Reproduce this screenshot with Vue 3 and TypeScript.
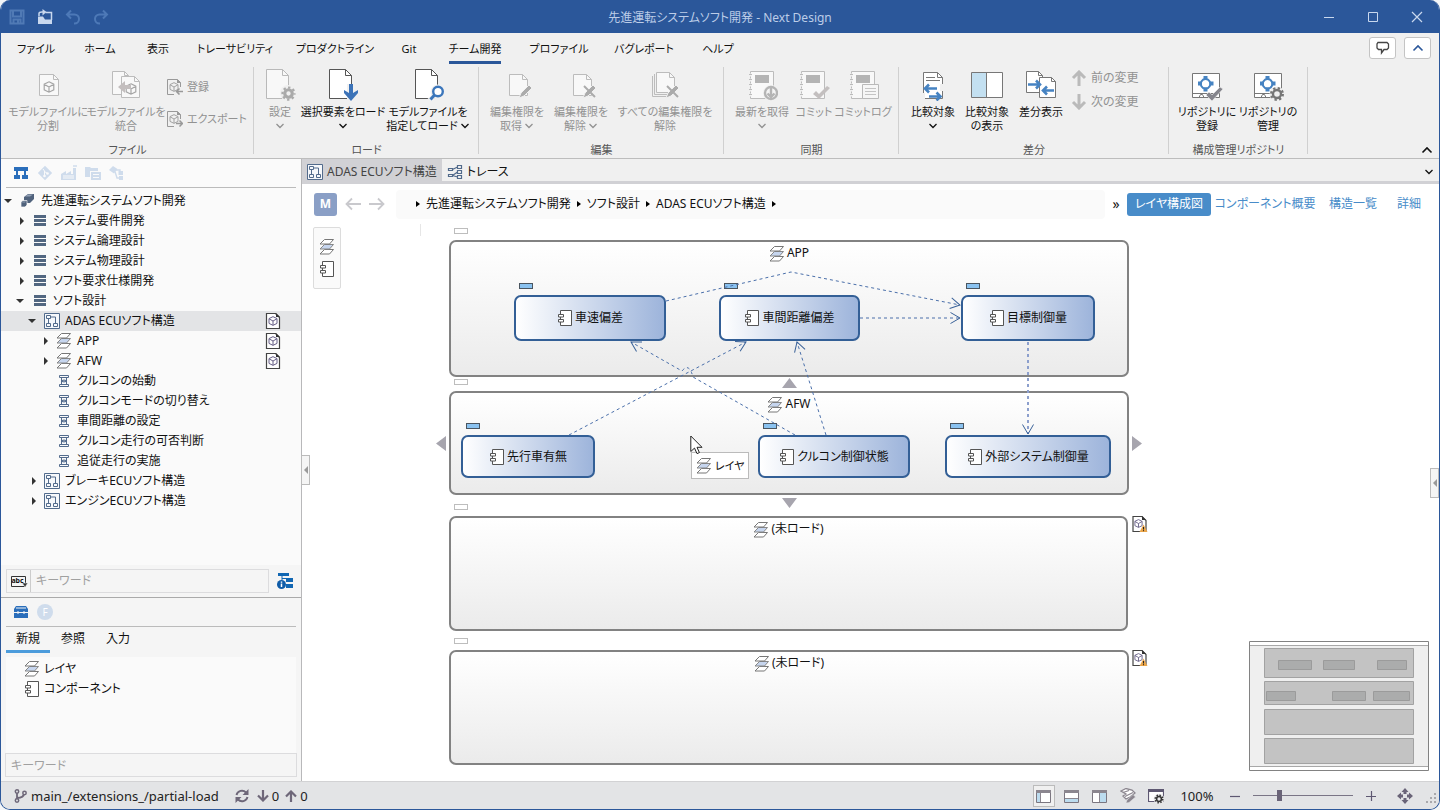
<script setup lang="ts">
import { ref } from 'vue'

interface RibbonButton {
  icon: string
  lines: string[]
  off?: boolean
  drop?: 'below' | 'inline'
}
interface SmallButton {
  icon: string
  text: string
}
interface RibbonGroup {
  id: string
  title: string
  buttons: RibbonButton[]
  small?: SmallButton[]
}
interface TreeRow {
  level: number
  icon: string
  text: string
  caret?: 'open' | 'closed'
  file?: boolean
}
interface Box {
  x: number
  y: number
  w: number
  h: number
  text: string
}

const menu = ['ファイル', 'ホーム', '表示', 'トレーサビリティ', 'プロダクトライン', 'Git', 'チーム開発', 'プロファイル', 'バグレポート', 'ヘルプ']
const activeMenu = ref('チーム開発')

const groups: RibbonGroup[] = [
  {
    id: 'file',
    title: 'ファイル',
    buttons: [
      { icon: 'split', lines: ['モデルファイルに', '分割'], off: true },
      { icon: 'merge', lines: ['モデルファイルを', '統合'], off: true },
    ],
    small: [
      { icon: 'register', text: '登録' },
      { icon: 'export', text: 'エクスポート' },
    ],
  },
  {
    id: 'load',
    title: 'ロード',
    buttons: [
      { icon: 'page-gear', lines: ['設定'], off: true, drop: 'below' },
      { icon: 'page-down', lines: ['選択要素をロード'], drop: 'below' },
      { icon: 'page-find', lines: ['モデルファイルを', '指定してロード'], drop: 'inline' },
    ],
  },
  {
    id: 'edit',
    title: '編集',
    buttons: [
      { icon: 'page-pen', lines: ['編集権限を', '取得'], off: true, drop: 'inline' },
      { icon: 'page-nopen', lines: ['編集権限を', '解除'], off: true, drop: 'inline' },
      { icon: 'pages-nopen', lines: ['すべての編集権限を', '解除'], off: true },
    ],
  },
  {
    id: 'sync',
    title: '同期',
    buttons: [
      { icon: 'book-down', lines: ['最新を取得'], off: true, drop: 'below' },
      { icon: 'book-check', lines: ['コミット'], off: true },
      { icon: 'book-log', lines: ['コミットログ'], off: true },
    ],
  },
  {
    id: 'diff',
    title: '差分',
    buttons: [
      { icon: 'cmp-page', lines: ['比較対象'], drop: 'below' },
      { icon: 'cmp-show', lines: ['比較対象', 'の表示'] },
      { icon: 'cmp-diff', lines: ['差分表示'] },
    ],
    small: [
      { icon: 'up', text: '前の変更' },
      { icon: 'down', text: '次の変更' },
    ],
  },
  {
    id: 'repo',
    title: '構成管理リポジトリ',
    buttons: [
      { icon: 'repo-check', lines: ['リポジトリに', '登録'] },
      { icon: 'repo-gear', lines: ['リポジトリの', '管理'] },
    ],
  },
]

const tree: TreeRow[] = [
  { level: 0, icon: 'project', text: '先進運転システムソフト開発', caret: 'open' },
  { level: 1, icon: 'bars', text: 'システム要件開発', caret: 'closed' },
  { level: 1, icon: 'bars', text: 'システム論理設計', caret: 'closed' },
  { level: 1, icon: 'bars', text: 'システム物理設計', caret: 'closed' },
  { level: 1, icon: 'bars', text: 'ソフト要求仕様開発', caret: 'closed' },
  { level: 1, icon: 'bars', text: 'ソフト設計', caret: 'open' },
  { level: 2, icon: 'struct', text: 'ADAS ECUソフト構造', caret: 'open', file: true },
  { level: 3, icon: 'layer', text: 'APP', caret: 'closed', file: true },
  { level: 3, icon: 'layer', text: 'AFW', caret: 'closed', file: true },
  { level: 3, icon: 'seq', text: 'クルコンの始動' },
  { level: 3, icon: 'seq', text: 'クルコンモードの切り替え' },
  { level: 3, icon: 'seq', text: '車間距離の設定' },
  { level: 3, icon: 'seq', text: 'クルコン走行の可否判断' },
  { level: 3, icon: 'seq', text: '追従走行の実施' },
  { level: 2, icon: 'struct', text: 'ブレーキECUソフト構造', caret: 'closed' },
  { level: 2, icon: 'struct', text: 'エンジンECUソフト構造', caret: 'closed' },
]
const selectedRow = ref('ADAS ECUソフト構造')

const crumbs = ['先進運転システムソフト開発', 'ソフト設計', 'ADAS ECUソフト構造']
const views = ['レイヤ構成図', 'コンポーネント概要', '構造一覧', '詳細']
const activeView = ref('レイヤ構成図')

const paletteTabs = ['新規', '参照', '入力']
const activePalette = ref('新規')

const layers: Box[] = [
  { x: 147, y: 18, w: 680, h: 137, text: 'APP' },
  { x: 147, y: 169, w: 680, h: 104, text: 'AFW' },
  { x: 147, y: 294, w: 679, h: 115, text: '(未ロード)' },
  { x: 147, y: 428, w: 680, h: 115, text: '(未ロード)' },
]
const parts: Box[] = [
  { x: 212, y: 73, w: 152, h: 46, text: '車速偏差' },
  { x: 417, y: 73, w: 141, h: 46, text: '車間距離偏差' },
  { x: 659, y: 73, w: 134, h: 46, text: '目標制御量' },
  { x: 159, y: 213, w: 134, h: 43, text: '先行車有無' },
  { x: 456, y: 213, w: 152, h: 43, text: 'クルコン制御状態' },
  { x: 643, y: 213, w: 166, h: 43, text: '外部システム制御量' },
]
const links = [
  'M364 79 L489 50 L658 83',
  'M558 96 H658',
  'M267 213 L444 120',
  'M493 213 L391 155 Q387 140 380 149 L329 120',
  'M524 213 L495 120',
]
const zoom = ref(25)

const place = (b: Box) => ({ left: `${b.x}px`, top: `${b.y}px`, width: `${b.w}px`, height: `${b.h}px` })
const tagAt = (b: Box, up: number) => ({ left: `${b.x + 5}px`, top: `${b.y - up}px` })
</script>

<template>
  <div class="window">
    <svg class="defs" aria-hidden="true">
      <defs>
        <marker id="tip" markerWidth="14" markerHeight="14" refX="11" refY="7" orient="auto" markerUnits="userSpaceOnUse">
          <path d="M1.500 1.500 L11 7 L1.500 12.500" fill="none" stroke="#3a6299" />
        </marker>
      </defs>
      <symbol id="i-save" viewBox="0 0 16 16"><path d="M1.500 1.500h13v13h-13zM4 1.500v6h8v-6M4.500 14.500v-4h7v4" fill="none" stroke="#507ab5" stroke-width="2" /><path d="M8 11h2v3h-2z" fill="#507ab5" /></symbol>
      <symbol id="i-open" viewBox="0 0 16 16"><path d="M1 7.500h5l2 3h7V15H1z" fill="#c9d8ee" /><path d="M8.500 3.500h6V11M2 7V4.500Q2 3 5 3h2" fill="none" stroke="#c9d8ee" stroke-width="1.500" /><path d="M5.500 0l4 3-4 3.500z" fill="#c9d8ee" /></symbol>
      <symbol id="i-undo" viewBox="0 0 16 16"><path d="M6 1.500L2 5.500l4 4M2 5.500h7.500a4.500 4.500 0 0 1 0 9H9" fill="none" stroke="#4d79b7" stroke-width="2" /></symbol>
      <symbol id="i-redo" viewBox="0 0 16 16"><path d="M10 1.500l4 4-4 4M14 5.500H6.500a4.500 4.500 0 0 0 0 9H7" fill="none" stroke="#4d79b7" stroke-width="2" /></symbol>

      <symbol id="i-cube" viewBox="0 0 12 12"><path d="M6 .8l4.800 2.300v5.800L6 11.200 1.200 8.900V3.100zM1.200 3.300L6 6l4.800-2.700M6 6v5" fill="none" stroke="currentColor" stroke-width="1.200" /></symbol>
      <symbol id="i-cog" viewBox="0 0 16 16"><circle cx="8" cy="8" r="4" fill="none" stroke="currentColor" stroke-width="3.400" /><circle cx="8" cy="8" r="6.400" fill="none" stroke="currentColor" stroke-width="2.400" stroke-dasharray="2.513" stroke-dashoffset="1.250" /></symbol>

      <symbol id="i-split" viewBox="0 0 32 32"><path d="M7.500 5.500h14l5 5v16h-19z" fill="#f8f8f8" stroke="#bcbcbc" /><path d="M21.500 5.500v5h5" fill="none" stroke="#bcbcbc" /><use href="#i-cube" x="11" y="12" width="12" height="12" color="#a6a6a6" /></symbol>
      <symbol id="i-merge" viewBox="0 0 32 32"><path d="M2.500 2.500h12l4 4v19h-16z" fill="#f8f8f8" stroke="#bcbcbc" /><path d="M14.500 2.500v4h4" fill="none" stroke="#bcbcbc" /><path d="M11.500 7.500h13l5 5v16h-18z" fill="#f8f8f8" stroke="#bcbcbc" /><path d="M24.500 7.500v5h5" fill="none" stroke="#bcbcbc" /><use href="#i-cube" x="15" y="14" width="12" height="12" color="#a6a6a6" /><path d="M8 18l7-6v4h6v4h-6v4z" fill="#c3bebe" /></symbol>
      <symbol id="i-register" viewBox="0 0 16 16"><path d="M7 15.500H.5V.5h10l3 3V8" fill="none" stroke="#999" /><path d="M10 0l4 4h-4z" fill="#999" /><use href="#i-cube" x="2" y="3" width="10" height="10" color="#a2a2a2" /><path d="M16 12.500h-6M12.500 9.500l-3 3 3 3" fill="none" stroke="#999" stroke-width="1.500" /></symbol>
      <symbol id="i-export" viewBox="0 0 16 16"><path d="M7 15.500H.5V.5h10l3 3V8" fill="none" stroke="#999" /><path d="M10 0l4 4h-4z" fill="#999" /><use href="#i-cube" x="2" y="3" width="10" height="10" color="#a2a2a2" /><path d="M9 12.500h6M12.500 9.500l3 3-3 3" fill="none" stroke="#999" stroke-width="1.500" /></symbol>
      <symbol id="i-page-gear" viewBox="0 0 32 32"><path d="M2.500.5h16l6 6v23h-22z" fill="#f8f8f8" stroke="#b9b9b9" /><path d="M18.500.5v6h6" fill="none" stroke="#b9b9b9" /><circle cx="24" cy="24" r="8" fill="#f0f0f0" /><use href="#i-cog" x="17" y="17" width="15" height="15" color="#aaa" /></symbol>
      <symbol id="i-page-down" viewBox="0 0 32 32"><path d="M2.500.5h16l6 6v23h-22z" fill="#fff" stroke="#555" /><path d="M18.500.5v6h6" fill="none" stroke="#555" /><path d="M20 15h8v17h-8z" fill="#f0f0f0" /><path d="M22 15h4v9l5-3v3l-7 8-7-8v-3l5 3z" fill="#3c73b8" /></symbol>
      <symbol id="i-page-find" viewBox="0 0 32 32"><path d="M3.500.5h16l6 6v23h-22z" fill="#fff" stroke="#555" /><path d="M19.500.5v6h6" fill="none" stroke="#555" /><circle cx="26" cy="23" r="7.500" fill="#f0f0f0" /><path d="M17 32l6-6" stroke="#f0f0f0" stroke-width="5" /><circle cx="26" cy="22.500" r="4.800" fill="#fff" stroke="#3b76bb" stroke-width="2.400" /><path d="M18.500 30.500l4-4.500" stroke="#3b76bb" stroke-width="3" /></symbol>
      <symbol id="i-page-pen" viewBox="0 0 32 32"><path d="M8.500 5.500h13l5 5v16h-18z" fill="#f8f8f8" stroke="#bcbcbc" /><path d="M21.500 5.500v5h5" fill="none" stroke="#bcbcbc" /><path d="M18 29l2-5 8-8 3 3-8 8z" fill="#ababab" stroke="#f0f0f0" /></symbol>
      <symbol id="i-page-nopen" viewBox="0 0 32 32"><path d="M8.500 5.500h13l5 5v16h-18z" fill="#f8f8f8" stroke="#bcbcbc" /><path d="M21.500 5.500v5h5" fill="none" stroke="#bcbcbc" /><path d="M18 29l2-5 8-8 3 3-8 8z" fill="#ababab" stroke="#f0f0f0" /><path d="M19 17l11 11" stroke="#ababab" stroke-width="2" /></symbol>
      <symbol id="i-pages-nopen" viewBox="0 0 32 32"><path d="M3.500 7v20.500h15M5.500 5v20.500h15" fill="none" stroke="#bcbcbc" /><path d="M7.500 3.500h13l5 5v15h-18z" fill="#f8f8f8" stroke="#bcbcbc" /><path d="M20.500 3.500v5h5" fill="none" stroke="#bcbcbc" /><path d="M17 29l2-5 8-8 3 3-8 8z" fill="#ababab" stroke="#f0f0f0" /><path d="M18 17l11 11" stroke="#ababab" stroke-width="2" /></symbol>
      <symbol id="i-book" viewBox="0 0 32 32"><path d="M4.500 2.500h23v27h-23z" fill="#f8f8f8" stroke="#bcbcbc" /><path d="M4.500 4.500v24" stroke="#f0f0f0" stroke-width="2" stroke-dasharray="3 2" /><path d="M3 5.500h3M3 10.500h3M3 15.500h3M3 20.500h3M3 25.500h3" stroke="#bcbcbc" /><path d="M9 6h14v8H9z" fill="#b4b4b4" /></symbol>
      <symbol id="i-book-down" viewBox="0 0 32 32"><use href="#i-book" width="32" height="32" /><circle cx="25" cy="24" r="8" fill="#f0f0f0" /><circle cx="25" cy="24" r="6" fill="#f4f4f4" stroke="#b4b4b4" stroke-width="2.400" /><path d="M25 19v9M21.500 24.500L25 28l3.500-3.500" fill="none" stroke="#b4b4b4" stroke-width="2.400" /></symbol>
      <symbol id="i-book-check" viewBox="0 0 32 32"><use href="#i-book" x="-1" width="32" height="32" /><path d="M15 25l3-3 3 3 8-8 3 2-11 11z" fill="#c3bfbf" /></symbol>
      <symbol id="i-book-log" viewBox="0 0 32 32"><use href="#i-book" width="32" height="32" /><path d="M15.500 15.500h16v14h-16z" fill="#f6f6f6" stroke="#b9b9b9" /><path d="M18 19.500h11M18 22.500h11M18 25.500h11" stroke="#c4c4c4" /></symbol>
      <symbol id="i-cmp-page" viewBox="0 0 32 32"><path d="M6.500 3.500h14l5 5v21h-19z" fill="#fff" stroke="#777" /><path d="M20.500 3.500v5h5" fill="none" stroke="#777" /><path d="M9 8.500h9M9 11.500h14" stroke="#777" /><path d="M5 24h3v7h-3zM23 15h4v7h-4z" fill="#f0f0f0" /><path d="M8 19.500h12M12 15.500l-4 4 4 4M12 27.500h12M19.500 23.500l4 4-4 4" fill="none" stroke="#4683c2" stroke-width="2.600" /></symbol>
      <symbol id="i-cmp-show" viewBox="0 0 32 32"><path d="M.5 3.500h31v25H.5z" fill="#fff" stroke="#777" /><path d="M1 4h14v24H1z" fill="#c3e0f1" /><path d="M15.500 4v24" stroke="#777" /></symbol>
      <symbol id="i-cmp-diff" viewBox="0 0 32 32"><path d="M1.500 2.500h12l4 4v17h-16z" fill="#fff" stroke="#777" /><path d="M13.500 2.500v4h4" fill="none" stroke="#777" /><path d="M14.500 8.500h12l4 4v16h-16z" fill="#fff" stroke="#777" /><path d="M26.500 8.500v4h4" fill="none" stroke="#777" /><path d="M3 15.500h12M11 11.500l4 4-4 4M29 21.500H18M22 17.500l-4 4 4 4" fill="none" stroke="#4683c2" stroke-width="2.600" /></symbol>
      <symbol id="i-up" viewBox="0 0 16 16"><path d="M8 16V2M2 8l6-6 6 6" fill="none" stroke="#bababa" stroke-width="3" /></symbol>
      <symbol id="i-down" viewBox="0 0 16 16"><path d="M8 0v14M2 8l6 6 6-6" fill="none" stroke="#bababa" stroke-width="3" /></symbol>
      <symbol id="i-repo" viewBox="0 0 32 32"><path d="M1.500 4.500h27v24h-27z" fill="#fff" stroke="#777" /><path d="M2 24.500h26M8 28.500l1.500-3h2l1.500 3M18 28.500l1.500-3h2" fill="none" stroke="#777" /><path d="M14.500 10a4.800 4.800 0 1 0 .1 0z" fill="none" stroke="#4683c2" stroke-width="2" /><path d="M12.500 7h4v4h-4zM12.500 18.500h4v4h-4zM7 12.500h4v4H7zM18.500 12.500h4v4h-4z" fill="#4683c2" /></symbol>
      <symbol id="i-repo-check" viewBox="0 0 32 32"><use href="#i-repo" width="32" height="32" /><path d="M15 26l3-3 3 3 8-8 3 2-11 12z" fill="#85858c" stroke="#f0f0f0" stroke-width=".6" /></symbol>
      <symbol id="i-repo-gear" viewBox="0 0 32 32"><use href="#i-repo" x="1" width="32" height="32" /><circle cx="25" cy="25" r="7.500" fill="#f0f0f0" /><circle cx="25" cy="25" r="4" fill="none" stroke="#777" stroke-width="2.400" /><circle cx="25" cy="25" r="5.800" fill="none" stroke="#777" stroke-width="2.400" stroke-dasharray="2.278" /></symbol>

      <symbol id="i-project" viewBox="0 0 16 16"><path d="M4 4l4-3h6v5l-4 4H4z" fill="#50627c" /><path d="M5 3.500l3-2h5l-3 2z" fill="#93a1b6" /><path d="M1 9l2-1.500h4V12l-2 2H1z" fill="#50627c" stroke="#fafafa" stroke-width=".7" /><path d="M2 9.500l1-1h3l-1 1z" fill="#93a1b6" /></symbol>
      <symbol id="i-bars" viewBox="0 0 16 16"><path d="M2 2h12v3H2zM2 6h12v3H2zM2 10h12v3H2z" fill="#526781" /></symbol>
      <symbol id="i-struct" viewBox="0 0 16 16"><path d="M.5.5h15v15H.5z" fill="#f6f8fb" stroke="#526b8c" /><path d="M2.500 2.500h4v3h-4zM2.500 10.500h4v3h-4zM9.500 10.500h4v3h-4zM4.500 5.500v5M6.500 4h5v6.500" fill="none" stroke="#526b8c" /></symbol>
      <symbol id="i-layer" viewBox="0 0 16 16"><path d="M5.500 10.500h9l-4 4.500H1z" fill="#fff" stroke="#777" /><path d="M5.500 5.500h9l-4 4.500H1z" fill="#c6d5ee" stroke="#888" /><path d="M5.500.5h9l-4 4.500H1z" fill="#fff" stroke="#777" /></symbol>
      <symbol id="i-part" viewBox="0 0 16 16"><path d="M3.500.5h11v15h-11z" fill="#fff" stroke="#555" /><path d="M1.500 4.500h5v2.500h-5zM1.500 9.500h5v2.500h-5z" fill="#fff" stroke="#555" /></symbol>
      <symbol id="i-seq" viewBox="0 0 16 16"><path d="M3.500 2.500h9v2h-9zM3.500 11.500h9v2h-9zM5.500 4.500v7M10.500 4.500v7M5.500 8h5" fill="none" stroke="#526b8c" /><path d="M7.500 6v4l-2-2zM8.500 6v4l2-2z" fill="#526b8c" /></symbol>
      <symbol id="i-file" viewBox="0 0 16 16"><path d="M1.500.5h9l4 4v11h-13z" fill="#fff" stroke="#444" stroke-width="1.200" /><path d="M11 0l4 4h-4z" fill="#333" /><use href="#i-cube" x="3" y="3" width="10" height="10" color="#675f86" /></symbol>
      <symbol id="i-file-warn" viewBox="0 0 16 16"><path d="M1 .5h9l4 4v11H1z" fill="#fff" stroke="#444" stroke-width="1.200" /><path d="M10 0l4 4h-4z" fill="#333" /><use href="#i-cube" x="2" y="3" width="9" height="9" color="#675f86" /><path d="M11.500 8.500L15.500 16h-8z" fill="#eba549" /><path d="M11.500 11v2.500M11.500 14.200v1" stroke="#222" /></symbol>
      <symbol id="i-trace" viewBox="0 0 16 16"><path d="M1.500 4.500h4v2h-4zM1.500 10.500h4v2h-4zM10.500 1.500h4v3h-4zM10.500 6.500h4v3h-4zM10.500 11.500h4v3h-4zM5.500 5.500l5-2.500M5.500 11.500L10.500 8M5.500 11.500l5 1.500" fill="none" stroke="#526b8c" stroke-width="1.200" /></symbol>

      <symbol id="i-nav-tree" viewBox="0 0 16 16"><path d="M1 2h14v4H1zM1 10h6v4H1zM9 10h6v4H9z" fill="#2a6ebb" /><path d="M4 6v4M12 6v4" stroke="#2a6ebb" stroke-width="2" /></symbol>
      <symbol id="i-nav-git" viewBox="0 0 16 16"><path d="M8 .8L15.200 8 8 15.200.8 8z" fill="#cfdcec" /><path d="M6 4l1.500 2v5M7.500 6.500l3 2" stroke="#fafafa" fill="none" /><circle cx="7.500" cy="11" r="1.300" fill="#fafafa" /><circle cx="10.500" cy="8.500" r="1.300" fill="#fafafa" /></symbol>
      <symbol id="i-nav-fac" viewBox="0 0 16 16"><path d="M0 15V9l5-3v3l5-3v3h2V3h3v12z" fill="#cfdcec" /><path d="M2 11h11M2 13h11" stroke="#fafafa" /><path d="M12 1h4" stroke="#cfdcec" stroke-width="1.500" /></symbol>
      <symbol id="i-nav-doc" viewBox="0 0 16 16"><path d="M0 2h5l1 1h7v3H5v6H0z" fill="#cfdcec" /><path d="M6 7h10v8H6z" fill="#cfdcec" /><path d="M8 9.500h6M8 12.500h6" stroke="#fafafa" /></symbol>
      <symbol id="i-nav-link" viewBox="0 0 16 16"><path d="M4 1l4.500 3L5 8.500 0 5zM9.500 6h4.500v4H9.500zM10 11h4v4h-4z" fill="#cfdcec" /><path d="M6 6.500L8 13h2M7 5h4v3" fill="none" stroke="#cfdcec" stroke-width="1.400" /></symbol>
      <symbol id="i-abc" viewBox="0 0 18 16"><path d="M1.500 3.500h14v10h-14z" fill="none" stroke="#333" /><path d="M12 10h6l-3 4z" fill="#333" stroke="#f5f5f5" stroke-width=".6" /></symbol>
      <symbol id="i-info" viewBox="0 0 16 16"><path d="M1 0h11v3H1zM9 5h7v4H9zM9 11h7v4H9z" fill="#1267b3" /><path d="M5 3v4M5 5.500h5" stroke="#1267b3" /><circle cx="4.500" cy="11.500" r="4.500" fill="#0f5ca8" /><path d="M4.500 8.500v1.300M4.500 10.500v3.500" stroke="#fff" stroke-width="1.500" /></symbol>
      <symbol id="i-box" viewBox="0 0 16 16"><path d="M3 2h10l2 3v3H1V5zM1 9h14v5H1z" fill="#2a6ebb" /><path d="M3 4h10" stroke="#f6f6f6" stroke-width="1" /><path d="M5 7v3M11 7v3" stroke="#f6f6f6" /></symbol>

      <symbol id="i-branch" viewBox="0 0 14 14"><path d="M3 3v8M3 9q7 0 7-5" fill="none" stroke="#6e6779" stroke-width="1.800" /><circle cx="3" cy="2.500" r="1.700" fill="#e3e4e6" stroke="#6e6779" stroke-width="1.500" /><circle cx="3" cy="11.500" r="1.700" fill="#e3e4e6" stroke="#6e6779" stroke-width="1.500" /><circle cx="10.500" cy="4" r="1.700" fill="#e3e4e6" stroke="#6e6779" stroke-width="1.500" /></symbol>
      <symbol id="i-sync" viewBox="0 0 14 14"><path d="M1.500 6A5.600 5.600 0 0 1 11 3.500M12.500 8A5.600 5.600 0 0 1 3 10.500" fill="none" stroke="#6e6779" stroke-width="1.900" /><path d="M13.500 0v6h-6zM.5 14V8h6z" fill="#6e6779" /></symbol>
      <symbol id="i-sdown" viewBox="0 0 12 12"><path d="M6 0v10M1 5.500l5 5 5-5" fill="none" stroke="#6e6779" stroke-width="2.200" /></symbol>
      <symbol id="i-sup" viewBox="0 0 12 12"><path d="M6 12V2M1 6.500l5-5 5 5" fill="none" stroke="#6e6779" stroke-width="2.200" /></symbol>
      <symbol id="i-p-left" viewBox="0 0 16 16"><path d="M.5 2.500h14v12H.5z" fill="#fff" stroke="#7b7680" /><path d="M0 2h15v3H0z" fill="#8b868f" /><path d="M1 5h3v9H1z" fill="#bcdcef" /><path d="M4.500 5v9" stroke="#8b868f" /></symbol>
      <symbol id="i-p-bottom" viewBox="0 0 16 16"><path d="M.5 2.500h14v12H.5z" fill="#fff" stroke="#7b7680" /><path d="M0 2h15v3H0z" fill="#8b868f" /><path d="M1 11h13v3H1z" fill="#bcdcef" /><path d="M1 10.500h13" stroke="#8b868f" /></symbol>
      <symbol id="i-p-right" viewBox="0 0 16 16"><path d="M.5 2.500h14v12H.5z" fill="#fff" stroke="#7b7680" /><path d="M0 2h15v3H0z" fill="#8b868f" /><path d="M8 5h6v9H8z" fill="#bcdcef" /><path d="M7.500 5v9" stroke="#8b868f" /></symbol>
      <symbol id="i-edit-model" viewBox="0 0 16 16"><path d="M1 3l5-2.500L12 2l3 3-5 4-4 2-3-3 3-2z" fill="#fff" stroke="#8b868f" stroke-width="1.300" /><path d="M3 4.500l6-2M5 8.500l8-4" stroke="#8b868f" stroke-width="1.300" /><path d="M6 15l1-3 6-5.500 2.500 2.500-6.500 5.500z" fill="#8b868f" stroke="#e3e4e6" stroke-width=".5" /></symbol>
      <symbol id="i-win-gear" viewBox="0 0 16 16"><path d="M.5 1.500h15v12H.5z" fill="#fff" stroke="#5e5872" stroke-width="1.200" /><path d="M0 1h16v3H0z" fill="#5e5872" /><circle cx="11" cy="11" r="5.300" fill="#e9e9eb" /><circle cx="11" cy="11" r="2.400" fill="none" stroke="#333" stroke-width="1.500" /><circle cx="11" cy="11" r="3.800" fill="none" stroke="#333" stroke-width="1.500" stroke-dasharray="1.492" /></symbol>
      <symbol id="i-move" viewBox="0 0 16 16"><path d="M8 0l3.500 4h-2v2h-3V4h-2zM8 16l-3.500-4h2v-2h3v2h2zM0 8l4-3.500v2h2v3H4v2zM16 8l-4 3.500v-2h-2v-3h2v-2z" fill="#6a6478" /></symbol>
      <symbol id="i-grip" viewBox="0 0 12 12"><path d="M9 0h2v2H9zM5 4h2v2H5zM9 4h2v2H9zM1 8h2v2H1zM5 8h2v2H5zM9 8h2v2H9z" fill="#a8a8ac" /></symbol>
      <symbol id="i-chev" viewBox="0 0 10 8"><path d="M1.500 2L5 5.500 8.500 2" fill="none" stroke="currentColor" stroke-width="1.300" /></symbol>
      <symbol id="i-chev-up" viewBox="0 0 12 8"><path d="M1.500 6.500L6 2l4.500 4.500" fill="none" stroke="currentColor" stroke-width="1.600" /></symbol>
      <symbol id="i-back" viewBox="0 0 16 14"><path d="M16 7H1.500M7 1.500L1.500 7 7 12.500" fill="none" stroke="#c9c9cd" stroke-width="1.800" /></symbol>
      <symbol id="i-fwd" viewBox="0 0 16 14"><path d="M0 7h14.500M9 1.500L14.500 7 9 12.500" fill="none" stroke="#c9c9cd" stroke-width="1.800" /></symbol>
    </svg>

    <header class="titlebar">
      <div class="quick">
        <button v-for="q in ['save', 'open', 'undo', 'redo']" :key="q" :aria-label="q"><svg class="i16"><use :href="`#i-${q}`" /></svg></button>
      </div>
      <h1>先進運転システムソフト開発 - Next Design</h1>
      <div class="winbtns">
        <button aria-label="minimize"><svg class="i12" viewBox="0 0 12 12"><path d="M1 6.500h10" stroke="#c9d8ee" /></svg></button>
        <button aria-label="maximize"><svg class="i12" viewBox="0 0 12 12"><path d="M1.500 1.500h9v9h-9z" fill="none" stroke="#c9d8ee" /></svg></button>
        <button aria-label="close"><svg class="i12" viewBox="0 0 12 12"><path d="M1 1l10 10M11 1L1 11" stroke="#c9d8ee" stroke-width="1.200" /></svg></button>
      </div>
    </header>

    <div class="menubar">
      <nav class="menu">
        <button v-for="m in menu" :key="m" :class="{ active: m === activeMenu }" @click="activeMenu = m"><span>{{ m }}</span></button>
      </nav>
      <div class="menu-right">
        <button aria-label="comment"><svg class="i14" viewBox="0 0 14 14"><path d="M2 1.500h9l1.500 1.500v4L11 8.500H8L5.500 12V8.500H2.500L1 7V3z" fill="none" stroke="#444" stroke-width="1.300" /></svg></button>
        <button aria-label="collapse"><svg class="chev-up blue"><use href="#i-chev-up" /></svg></button>
      </div>
    </div>

    <section class="ribbon">
      <div v-for="g in groups" :key="g.id" class="group" :class="`group-${g.id}`">
        <div class="group-body">
          <button v-for="b in g.buttons" :key="b.icon" class="big" :disabled="b.off">
            <svg class="i32"><use :href="`#i-${b.icon}`" /></svg>
            <span v-for="(l, n) in b.lines" :key="n" class="line">
              {{ l }}<svg v-if="b.drop === 'inline' && n === 1" class="chev"><use href="#i-chev" /></svg>
            </span>
            <span v-if="b.drop === 'below'" class="line"><svg class="chev"><use href="#i-chev" /></svg></span>
          </button>
          <div v-if="g.small" class="smalls">
            <button v-for="s in g.small" :key="s.icon" class="small" disabled><svg class="i16"><use :href="`#i-${s.icon}`" /></svg>{{ s.text }}</button>
          </div>
        </div>
        <div class="group-title">{{ g.title }}</div>
      </div>
      <button class="pin" aria-label="fold ribbon"><svg class="chev-up"><use href="#i-chev-up" /></svg></button>
    </section>

    <div class="body">
      <aside class="side">
        <div class="side-tools">
          <button v-for="t in ['nav-tree', 'nav-git', 'nav-fac', 'nav-doc', 'nav-link']" :key="t" :aria-label="t"><svg class="i16"><use :href="`#i-${t}`" /></svg></button>
        </div>
        <ul class="tree">
          <li v-for="r in tree" :key="r.text" :class="[`lv${r.level}`, { selected: r.text === selectedRow }]" @click="selectedRow = r.text">
            <svg class="caret" viewBox="0 0 8 8">
              <path v-if="r.caret === 'open'" d="M0 2h8L4 6z" fill="#333" />
              <path v-else-if="r.caret === 'closed'" d="M4 0l4 4-4 4z" fill="#333" />
            </svg>
            <svg class="i16"><use :href="`#i-${r.icon}`" /></svg>
            <span class="label">{{ r.text }}</span>
            <svg v-if="r.file" class="i16"><use href="#i-file" /></svg>
          </li>
        </ul>
        <div class="search">
          <div class="field">
            <button class="abc" aria-label="match mode"><svg class="abc-icon"><use href="#i-abc" /></svg><span>abc</span></button>
            <input type="text" placeholder="キーワード" aria-label="キーワード" />
          </div>
          <button aria-label="info"><svg class="i16"><use href="#i-info" /></svg></button>
        </div>
        <div class="palette">
          <div class="palette-tools">
            <button aria-label="toolbox"><svg class="i16"><use href="#i-box" /></svg></button>
            <button class="round">F</button>
          </div>
          <div class="palette-tabs">
            <button v-for="t in paletteTabs" :key="t" :class="{ active: t === activePalette }" @click="activePalette = t">{{ t }}</button>
          </div>
          <ul class="palette-list">
            <li><svg class="i16"><use href="#i-layer" /></svg>レイヤ</li>
            <li><svg class="i16"><use href="#i-part" /></svg>コンポーネント</li>
          </ul>
          <input class="palette-search" type="text" placeholder="キーワード" aria-label="パレット キーワード" />
        </div>
        <button class="handle handle-left" aria-label="fold side"><svg viewBox="0 0 4 8"><path d="M4 0v8L0 4z" fill="#999" /></svg></button>
      </aside>

      <main class="main">
        <div class="doc-tabs">
          <button class="active"><svg class="i16"><use href="#i-struct" /></svg>ADAS ECUソフト構造</button>
          <button><svg class="i16"><use href="#i-trace" /></svg>トレース</button>
          <button class="more" aria-label="tabs"><svg class="chev"><use href="#i-chev" /></svg></button>
        </div>
        <div class="viewbar">
          <button class="m">M</button>
          <button class="arrow" aria-label="back"><svg><use href="#i-back" /></svg></button>
          <button class="arrow" aria-label="forward"><svg><use href="#i-fwd" /></svg></button>
          <nav class="crumbs">
            <svg class="dot" viewBox="0 0 4 6"><path d="M0 0l4 3-4 3z" /></svg>
            <template v-for="c in crumbs" :key="c">
              <a href="#">{{ c }}</a>
              <svg class="dot" viewBox="0 0 4 6"><path d="M0 0l4 3-4 3z" /></svg>
            </template>
          </nav>
          <span class="dbl">»</span>
          <nav class="views">
            <button v-for="v in views" :key="v" :class="{ active: v === activeView }" @click="activeView = v">{{ v }}</button>
          </nav>
        </div>

        <div class="canvas">
          <div class="toolbox">
            <button aria-label="レイヤ"><svg class="i16"><use href="#i-layer" /></svg></button>
            <button aria-label="コンポーネント"><svg class="i16"><use href="#i-part" /></svg></button>
          </div>
          <div class="mark"></div>
          <template v-for="l in layers" :key="l.y">
            <div class="tag" :style="tagAt(l, 12)"></div>
            <div class="layer" :style="place(l)"><svg class="i16"><use href="#i-layer" /></svg>{{ l.text }}</div>
          </template>
          <template v-for="p in parts" :key="p.text">
            <div class="tag blue" :style="tagAt(p, 12)"></div>
            <div class="part" :style="place(p)"><svg class="i16"><use href="#i-part" /></svg>{{ p.text }}</div>
          </template>
          <svg class="links" aria-hidden="true">
            <path v-for="d in links" :key="d" :d="d" fill="none" stroke="#4a6faa" stroke-dasharray="3 3" marker-end="url(#tip)" />
            <path d="M726 120 V212" fill="none" stroke="#8c9fcd" stroke-width="2" stroke-dasharray="3 3" marker-end="url(#tip)" />
            <path d="M480 166h15l-7.500-10zM480 276h15l-7.500 10zM144 214v15l-10-7.500zM830 214v15l10-7.500z" fill="#a7a5ae" />
          </svg>
          <svg class="i16 warn warn-a"><use href="#i-file-warn" /></svg>
          <svg class="i16 warn warn-b"><use href="#i-file-warn" /></svg>
          <div class="drag"><svg class="i16"><use href="#i-layer" /></svg>レイヤ</div>
          <svg class="cursor" viewBox="0 0 13 20"><path d="M.8 1v15.500l3.700-3.400 2.500 5.500 2.400-1-2.400-5.300h5z" fill="#fff" stroke="#222" /></svg>
          <svg class="minimap" viewBox="0 0 180 130">
            <path d="M.5.500h179v129H.5z" fill="#fff" stroke="#828282" />
            <path d="M1 4.500h178v121H1z" fill="#efefef" />
            <path d="M1 4.500h178M1 125.500h178" stroke="#a8a8a8" />
            <g fill="#c3c3c3" stroke="#a2a2a2">
              <path d="M15.500 7.500h149v29h-149zM15.500 40.500h149v23h-149zM15.500 68.500h149v25h-149zM15.500 97.500h149v25h-149z" />
            </g>
            <g fill="#abacac" stroke="#9b9b9b">
              <path d="M29.500 19.500h33v9h-33zM74.500 19.500h31v9h-31zM128.500 19.500h29v9h-29zM17.500 50.500h29v9h-29zM83.500 50.500h33v9h-33zM124.500 50.500h36v9h-36z" />
            </g>
          </svg>
          <button class="handle handle-right" aria-label="fold inspector"><svg viewBox="0 0 4 8"><path d="M4 0v8L0 4z" fill="#999" /></svg></button>
        </div>
      </main>
    </div>

    <footer class="status">
      <svg class="i14"><use href="#i-branch" /></svg>
      <span class="branch">main_/extensions_/partial-load</span>
      <svg class="i14 sync"><use href="#i-sync" /></svg>
      <svg class="i12"><use href="#i-sdown" /></svg><span class="num">0</span>
      <svg class="i12"><use href="#i-sup" /></svg><span class="num">0</span>
      <div class="status-right">
        <button v-for="(s, n) in ['p-left', 'p-bottom', 'p-right', 'edit-model', 'win-gear']" :key="s" class="sbtn" :class="{ on: n === 0 }" :aria-label="s"><svg class="i16"><use :href="`#i-${s}`" /></svg></button>
        <span class="pct">100%</span>
        <button class="step" aria-label="zoom out"><svg class="i12" viewBox="0 0 12 12"><path d="M1 6.500h10" stroke="#5e5872" stroke-width="1.200" /></svg></button>
        <input v-model="zoom" class="slider" type="range" min="0" max="100" aria-label="zoom" />
        <button class="step" aria-label="zoom in"><svg class="i12" viewBox="0 0 12 12"><path d="M1 6.500h10M6.500 1v10" stroke="#5e5872" stroke-width="1.200" /></svg></button>
        <button class="fit" aria-label="fit"><svg class="i16"><use href="#i-move" /></svg></button>
        <svg class="i12 grip"><use href="#i-grip" /></svg>
      </div>
    </footer>
  </div>
</template>

<style>
body {
  background: #f4f6f8;
}
</style>

<style scoped>
.window {
  display: flex;
  flex-direction: column;
  height: 100vh;
  box-sizing: border-box;
  border: 1px solid #2b579a;
  border-top: 0;
  border-radius: 10px;
  overflow: hidden;
  background: #f0f0f0;
  color: #111;
  font: 12px/14px "Noto Sans", "Noto Sans CJK JP", sans-serif;
  font-feature-settings: "palt";
}
.defs {
  position: absolute;
  width: 0;
  height: 0;
}
button,
input {
  font: inherit;
  font-feature-settings: inherit;
  color: inherit;
  margin: 0;
}
button {
  display: flex;
  align-items: center;
  justify-content: center;
  padding: 0;
  border: 0;
  background: none;
  white-space: nowrap;
}
svg {
  display: block;
  flex: none;
}
ul {
  list-style: none;
  margin: 0;
  padding: 0;
}
a {
  color: inherit;
  text-decoration: none;
}
.i12 { width: 12px; height: 12px; }
.i14 { width: 14px; height: 14px; }
.i16 { width: 16px; height: 16px; }
.i32 { width: 32px; height: 32px; }
.chev { width: 10px; height: 8px; }
.chev-up { width: 12px; height: 8px; }
.chev-up.blue { color: #2b579a; }

.titlebar {
  display: grid;
  grid-template-columns: 1fr auto 1fr;
  align-items: center;
  height: 33px;
  flex: none;
  background: #2b579a;
}
.titlebar h1 {
  margin: 0;
  padding-top: 2px;
  font-size: 12px;
  font-weight: 400;
  color: #bccde8;
}
.quick {
  display: flex;
  gap: 12px;
  padding-left: 8px;
}
.winbtns {
  display: flex;
  justify-content: flex-end;
}
.winbtns button {
  width: 44px;
  height: 33px;
}

.menubar {
  display: flex;
  justify-content: space-between;
  height: 32px;
  flex: none;
}
.menu {
  display: grid;
  grid-template-columns: 66px 62px 54px 100px 100px 48px 84px 84px 86px 62px;
  padding-left: 2px;
  font-size: 11px;
}
.menu span {
  padding: 7px 0 5px;
  border-bottom: 3px solid transparent;
}
.menu .active span {
  border-color: #2b579a;
}
.menu-right {
  display: flex;
  gap: 8px;
  padding: 4px 8px;
}
.menu-right button {
  width: 27px;
  height: 22px;
  box-sizing: border-box;
  border: 1px solid #c4c4c4;
  border-radius: 3px;
  background: #fff;
}

.ribbon {
  display: flex;
  height: 93px;
  flex: none;
  border-bottom: 1px solid #bdbdbd;
  font-size: 11px;
}
.group {
  display: flex;
  flex-direction: column;
  position: relative;
  box-sizing: border-box;
}
.group::after {
  content: "";
  position: absolute;
  right: 0;
  top: 2px;
  bottom: 4px;
  width: 1px;
  background: #d0d0d0;
}
.group-body {
  display: grid;
  flex: 1;
  padding: 4px 0 0 8px;
}
.group-file { width: 253px; }
.group-load { width: 225px; }
.group-edit { width: 245px; }
.group-sync { width: 175px; }
.group-diff { width: 270px; }
.group-repo { width: 139px; }
.group-file .group-body { grid-template-columns: 78px 78px 1fr; }
.group-load .group-body { grid-template-columns: 36px 90px 80px; }
.group-edit .group-body { grid-template-columns: 60px 68px 100px; }
.group-sync .group-body { grid-template-columns: 60px 44px 54px; }
.group-diff .group-body { grid-template-columns: 52px 56px 52px 1fr; }
.group-repo .group-body { grid-template-columns: 60px 62px; }
.group-title {
  height: 15px;
  text-align: center;
  color: #555;
}
.big {
  flex-direction: column;
  justify-content: flex-start;
}
.big .i32 {
  margin-bottom: 4px;
}
.line {
  display: flex;
  align-items: center;
  gap: 2px;
  height: 14px;
}
.big:disabled,
.small {
  color: #929292;
}
.smalls {
  display: flex;
  flex-direction: column;
  align-items: flex-start;
  gap: 16px;
  padding: 10px 0 0 2px;
}
.group-diff .smalls {
  gap: 8px;
  padding: 1px 0 0 4px;
}
.small {
  gap: 4px;
}
.group-diff .small {
  font-size: 12px;
}
.pin {
  align-self: flex-end;
  width: 24px;
  height: 16px;
  margin-left: auto;
}

.body {
  display: flex;
  flex: 1;
  min-height: 0;
}
.side {
  display: flex;
  flex-direction: column;
  position: relative;
  width: 300px;
  flex: none;
  border-right: 1px solid #b8b8ba;
  background: #fafafa;
}
.side-tools,
.palette-tools {
  display: flex;
  align-items: center;
  gap: 8px;
  height: 28px;
  margin: 0 5px;
  padding-left: 7px;
  border-bottom: 1px solid #bbb;
}
.tree {
  flex: 1;
  padding-top: 3px;
}
.tree li {
  display: flex;
  align-items: center;
  height: 20px;
  padding-right: 20px;
}
.tree .i16 {
  margin-left: 8px;
}
.label {
  flex: 1;
  padding-left: 5px;
  white-space: nowrap;
}
.caret {
  width: 8px;
  height: 8px;
}
.lv0 { padding-left: 3px; }
.lv1 { padding-left: 15px; }
.lv2 { padding-left: 27px; }
.lv3 { padding-left: 39px; }
.selected {
  background: #e3e4e6;
}
.search {
  display: flex;
  align-items: center;
  gap: 8px;
  padding: 4px 8px 4px 5px;
  background: #f5f5f5;
}
.field {
  display: flex;
  flex: 1;
  height: 22px;
  border: 1px solid #dcdcde;
}
.abc {
  display: grid;
  justify-items: center;
  width: 24px;
  border-right: 1px solid #ccc;
}
.abc svg,
.abc span {
  grid-area: 1 / 1;
}
.abc-icon {
  width: 18px;
  height: 16px;
}
.abc span {
  font-size: 7px;
  font-weight: 700;
  line-height: 10px;
  padding-right: 2px;
}
input[type="text"] {
  flex: 1;
  min-width: 0;
  padding: 0 5px;
  border: 0;
  outline: 0;
  background: none;
}
input::placeholder {
  color: #a0a0a0;
}
.palette {
  display: flex;
  flex-direction: column;
  height: 183px;
  border-top: 1px solid #aaa;
  background: #f5f5f5;
}
.round {
  width: 16px;
  height: 16px;
  border-radius: 8px;
  background: #cfdcec;
  color: #fff;
  font-size: 10px;
}
.palette-tabs {
  display: flex;
  gap: 1px;
  padding: 0 5px 4px;
}
.palette-tabs button {
  width: 44px;
  height: 26px;
  border-bottom: 3px solid transparent;
  box-sizing: border-box;
}
.palette-tabs .active {
  border-color: #4c9cdc;
}
.palette-list {
  flex: 1;
  margin: 0 5px;
  padding-top: 2px;
  background: #fafafa;
}
.palette-list li {
  display: flex;
  align-items: center;
  gap: 4px;
  height: 20px;
  padding-left: 18px;
}
.palette input[type="text"] {
  flex: none;
  height: 24px;
  margin: 0 4px 4px;
  box-sizing: border-box;
  border: 1px solid #dcdcde;
}
.handle {
  position: absolute;
  width: 9px;
  height: 30px;
  box-sizing: border-box;
  border: 1px solid #bbb;
  background: #f5f5f5;
}
.handle svg {
  width: 4px;
  height: 8px;
}
.handle-left {
  left: 300px;
  top: 296px;
  z-index: 2;
}
.handle-right {
  right: 0;
  top: 246px;
}

.main {
  display: flex;
  flex-direction: column;
  flex: 1;
  min-width: 0;
  background: #fff;
}
.doc-tabs {
  display: flex;
  height: 22px;
  flex: none;
  background: #f0f0f0;
  border-bottom: 3px solid #d1d1d5;
}
.doc-tabs button {
  gap: 4px;
  height: 25px;
  padding: 0 5px;
}
.doc-tabs .active {
  background: #d1d1d5;
  color: #444;
}
.doc-tabs .more {
  margin-left: auto;
}
.viewbar {
  display: flex;
  align-items: center;
  height: 40px;
  flex: none;
  padding: 0 8px 0 12px;
}
.m {
  width: 23px;
  height: 23px;
  border-radius: 3px;
  background: #8a9fc6;
  color: #fff;
  font-weight: 700;
}
.arrow {
  margin-left: 8px;
}
.arrow svg {
  width: 16px;
  height: 14px;
}
.crumbs {
  display: flex;
  align-items: center;
  gap: 6px;
  flex: 1;
  height: 29px;
  margin-left: 11px;
  padding-left: 20px;
  border-radius: 4px;
  background: #fafafa;
  white-space: nowrap;
}
.dot {
  width: 4px;
  height: 6px;
}
.dbl {
  width: 22px;
  text-align: center;
  font-size: 14px;
}
.views {
  display: grid;
  grid-template-columns: 84px 108px 68px 44px;
}
.views button {
  height: 23px;
  border-radius: 3px;
  color: #488cc9;
}
.views .active {
  background: #488cc9;
  color: #fff;
}

.canvas {
  position: relative;
  flex: 1;
  min-height: 0;
  margin-top: -2px;
  overflow: hidden;
}
.toolbox {
  position: absolute;
  left: 11px;
  top: 5px;
  display: flex;
  flex-direction: column;
  align-items: center;
  gap: 6px;
  width: 28px;
  padding: 11px 0;
  box-sizing: border-box;
  height: 62px;
  border: 1px solid #dcdcdc;
  border-radius: 2px;
  background: #fafafa;
}
.mark {
  position: absolute;
  left: 118px;
  top: 2px;
  width: 1px;
  height: 12px;
  background: #e6e6e6;
}
.layer,
.part {
  position: absolute;
  box-sizing: border-box;
  display: flex;
  justify-content: center;
  gap: 2px;
  white-space: nowrap;
}
.layer {
  padding-top: 4px;
  border: 2px solid #828282;
  border-radius: 7px;
  background: linear-gradient(#fff, #ebebeb);
}
.part {
  align-items: center;
  border: 2px solid #335f96;
  border-radius: 7px;
  background: linear-gradient(90deg, #fff, #9db4db);
}
.tag {
  position: absolute;
  width: 14px;
  height: 6px;
  box-sizing: border-box;
  border: 1px solid #bdbdbd;
  background: #fff;
}
.tag.blue {
  border-color: #4a5560;
  background: #8ac2f0;
}
.links {
  position: absolute;
  left: 0;
  top: 0;
  width: 100%;
  height: 100%;
}
.warn {
  position: absolute;
  left: 830px;
}
.warn-a { top: 294px; }
.warn-b { top: 428px; }
.drag {
  position: absolute;
  left: 389px;
  top: 230px;
  display: flex;
  align-items: center;
  gap: 3px;
  height: 27px;
  padding: 0 4px;
  box-sizing: border-box;
  border: 1px solid #bbb;
  background: #fff;
  font-size: 11px;
}
.cursor {
  position: absolute;
  left: 388px;
  top: 213px;
  width: 13px;
  height: 20px;
}
.minimap {
  position: absolute;
  right: 10px;
  bottom: 10px;
  width: 180px;
  height: 130px;
}

.status {
  display: flex;
  align-items: center;
  height: 28px;
  flex: none;
  box-sizing: border-box;
  padding-left: 13px;
  border-top: 1px solid #d2d2d4;
  background: #e3e4e6;
  color: #222;
  font-size: 13px;
  line-height: 18px;
}
.branch {
  padding: 0 16px 0 3px;
}
.sync {
  margin-right: 8px;
}
.num {
  padding: 0 6px 0 3px;
}
.status-right {
  display: flex;
  align-items: center;
  margin-left: auto;
}
.sbtn {
  width: 22px;
  height: 22px;
  margin-right: 6px;
  box-sizing: border-box;
}
.sbtn.on {
  border: 1px solid #bbb;
  background: #f0f0f0;
}
.pct {
  width: 50px;
  padding-right: 2px;
  box-sizing: border-box;
  text-align: center;
}
.step {
  width: 24px;
  height: 22px;
}
.slider {
  appearance: none;
  width: 100px;
  height: 12px;
  margin: 0 6px;
  background: linear-gradient(#7a7586, #7a7586) center / 100% 1px no-repeat;
}
.slider::-webkit-slider-thumb {
  appearance: none;
  width: 5px;
  height: 11px;
  background: #6a6478;
}
.fit {
  margin-left: 14px;
}
.grip {
  align-self: flex-end;
  margin: 0 2px 2px 12px;
}
</style>
